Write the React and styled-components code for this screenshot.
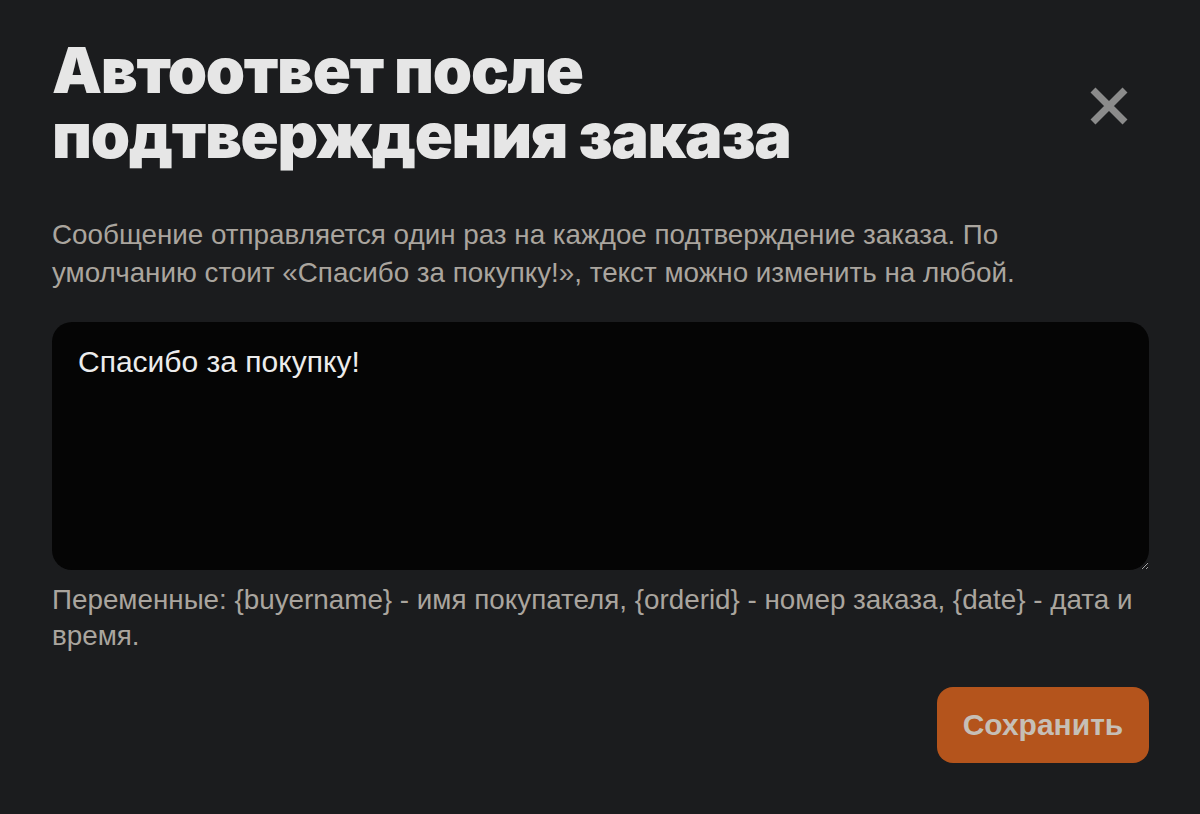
import React from "react";
import styled, { createGlobalStyle } from "styled-components";

const Global = createGlobalStyle`
  html, body { margin: 0; padding: 0; background: #1b1c1e; }
  body { font-family: "Liberation Sans", Arial, sans-serif; }
  * { box-sizing: border-box; }
`;

const Modal = styled.div`
  width: 1200px;
  height: 814px;
  background: #1b1c1e;
  padding: 38px 51px 0 52px;
  display: flex;
  flex-direction: column;
`;

const Header = styled.div`
  display: flex;
  justify-content: space-between;
  align-items: flex-start;
`;

const Title = styled.h1`
  margin: 0;
  font-family: Inter, "Liberation Sans", sans-serif;
  font-weight: 900;
  font-size: 63px;
  line-height: 65px;
  letter-spacing: -1.3px;
  color: #e6e6e6;
  max-width: 800px;
`;

const Close = styled.button`
  margin-top: 46px;
  margin-right: 18px;
  width: 44px;
  height: 44px;
  border: 0;
  background: none;
  padding: 0;
  cursor: pointer;
  display: flex;
  align-items: center;
  justify-content: center;
`;

const Description = styled.p`
  margin: 48px 0 0;
  font-size: 27.8px;
  line-height: 38px;
  color: #aaa59e;
`;

const Area = styled.textarea`
  margin-top: 30px;
  width: 100%;
  height: 248px;
  flex-shrink: 0;
  background: #050505;
  border: 0;
  border-radius: 20px;
  padding: 22px 26px;
  color: #ececec;
  font-family: "Liberation Sans", Arial, sans-serif;
  font-size: 30px;
  line-height: 36px;
  outline: none;
  resize: vertical;
`;

const Hint = styled.p`
  margin: 12px 0 0;
  font-size: 27.8px;
  line-height: 36px;
  color: #aaa59e;
`;

const Footer = styled.div`
  display: flex;
  justify-content: flex-end;
  margin-top: 33px;
`;

const SaveButton = styled.button`
  width: 212px;
  height: 76px;
  border: 0;
  border-radius: 16px;
  background: #b4541c;
  color: #c6bfb6;
  font-family: "Liberation Sans", Arial, sans-serif;
  font-weight: 700;
  font-size: 30px;
  cursor: pointer;
`;

const hintText =
  "Переменные: {buyername} - имя покупателя, {orderid} - номер заказа, {date} - дата и время.";

export default function App() {
  return (
    <>
      <Global />
      <Modal>
        <Header>
          <Title>Автоответ после подтверждения заказа</Title>
          <Close aria-label="Закрыть">
            <svg width="40" height="40" viewBox="0 0 40 40">
              <path d="M4 4 L36 36 M36 4 L4 36" stroke="#8b8b8b" strokeWidth="7" strokeLinecap="butt" />
            </svg>
          </Close>
        </Header>
        <Description>
          Сообщение отправляется один раз на каждое подтверждение заказа. По умолчанию стоит «Спасибо за покупку!», текст можно изменить на любой.
        </Description>
        <Area defaultValue="Спасибо за покупку!" />
        <Hint>{hintText}</Hint>
        <Footer>
          <SaveButton>Сохранить</SaveButton>
        </Footer>
      </Modal>
    </>
  );
}
